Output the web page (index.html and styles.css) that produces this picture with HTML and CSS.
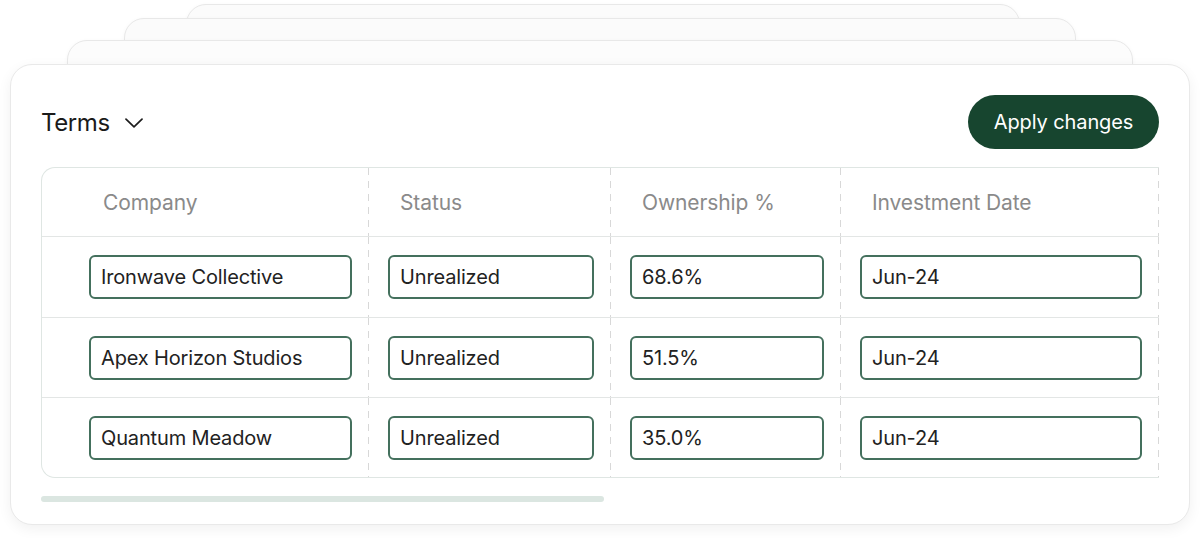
FILE: index.html
```html
<!DOCTYPE html>
<html lang="en">
<head>
<meta charset="utf-8">
<title>Terms</title>
<link rel="stylesheet" href="styles.css">
</head>
<body>
<div class="stage">
  <div class="ghost ghost-3"></div>
  <div class="ghost ghost-2"></div>
  <div class="ghost ghost-1"></div>
  <section class="card">
    <header class="card-head">
      <button class="title" type="button">
        <span>Terms</span>
        <svg class="chev" width="18" height="10" viewBox="0 0 18 10" fill="none"><path d="M1 1.2 L9 8.8 L17 1.2" stroke="#1c1c1c" stroke-width="1.7" stroke-linecap="round" stroke-linejoin="round"/></svg>
      </button>
      <button class="apply" type="button">Apply changes</button>
    </header>
    <div class="table">
      <div class="row head">
        <div class="cell c1">Company</div>
        <div class="cell c2">Status</div>
        <div class="cell c3">Ownership %</div>
        <div class="cell c4">Investment Date</div>
      </div>
      <div class="row first">
        <div class="cell c1"><div class="field">Ironwave Collective</div></div>
        <div class="cell c2"><div class="field">Unrealized</div></div>
        <div class="cell c3"><div class="field">68.6%</div></div>
        <div class="cell c4"><div class="field">Jun-24</div></div>
      </div>
      <div class="row">
        <div class="cell c1"><div class="field">Apex Horizon Studios</div></div>
        <div class="cell c2"><div class="field">Unrealized</div></div>
        <div class="cell c3"><div class="field">51.5%</div></div>
        <div class="cell c4"><div class="field">Jun-24</div></div>
      </div>
      <div class="row last">
        <div class="cell c1"><div class="field">Quantum Meadow</div></div>
        <div class="cell c2"><div class="field">Unrealized</div></div>
        <div class="cell c3"><div class="field">35.0%</div></div>
        <div class="cell c4"><div class="field">Jun-24</div></div>
      </div>
    </div>
    <div class="scrollbar"></div>
  </section>
</div>
</body>
</html>
```

FILE: styles.css
```css
* { box-sizing: border-box; }
html, body {
  margin: 0;
  padding: 0;
  background: #ffffff;
}
body {
  font-family: Inter, "Noto Sans", "Liberation Sans", sans-serif;
  color: #1c1c1c;
}
.stage {
  position: relative;
  width: 1200px;
  height: 538px;
  padding: 64px 10px 0 10px;
}
.ghost {
  position: absolute;
  height: 120px;
  background: #fbfbfb;
  border: 1px solid #e8e8e8;
  border-radius: 20px;
  box-shadow: 0 1px 4px rgba(0,0,0,0.04);
}
.ghost-3 { left: 186px; width: 834px; top: 4px; }
.ghost-2 { left: 124px; width: 952px; top: 18px; }
.ghost-1 { left: 67px; width: 1066px; top: 40px; background: #fcfcfc; }

.card {
  position: relative;
  width: 1180px;
  height: 461px;
  background: #ffffff;
  border: 1px solid #e9e9e9;
  border-radius: 22px;
  box-shadow: 0 4px 14px rgba(0,0,0,0.06);
  padding: 30px 30px 0 30px;
}
.card-head {
  display: flex;
  align-items: center;
  justify-content: space-between;
  height: 54px;
}
.title {
  display: flex;
  align-items: center;
  gap: 15px;
  border: 0;
  background: none;
  padding: 0;
  font: inherit;
  font-size: 24px;
  color: #1a1a1a;
  letter-spacing: -0.4px;
}
.chev { margin-top: 1px; }
.apply {
  height: 54px;
  width: 191px;
  border: 0;
  border-radius: 27px;
  background: #17452f;
  color: #ffffff;
  font: inherit;
  font-size: 20px;
  letter-spacing: -0.1px;
  padding: 0;
}
.table {
  margin-top: 18px;
  width: 1118px;
  border: 1px solid #dfe6e3;
  border-right: 0;
  border-radius: 14px 0 0 14px;
  overflow: hidden;
}
.row {
  display: flex;
  height: 80px;
  border-bottom: 1px solid #e3e6e5;
}
.row.head { height: 69px; }
.row.first { height: 81px; }
.row.last { height: 79px; border-bottom: 0; }
.cell {
  display: flex;
  align-items: center;
  padding: 0 17px 0 19px;
  background-image: repeating-linear-gradient(to bottom, #d8d8d8 0 7px, transparent 7px 13px);
  background-size: 1px 100%;
  background-position: right top;
  background-repeat: no-repeat;
}
.c1 { width: 327px; padding-left: 47px; }
.c2 { width: 242px; }
.c3 { width: 230px; }
.c4 { width: 318px; }
.head .cell {
  font-size: 21px;
  color: #8a8a8a;
  padding-left: 31px;
  letter-spacing: -0.1px;
}
.head .c1 { padding-left: 61px; }
.field {
  width: 100%;
  height: 44px;
  border: 2px solid #44705d;
  border-radius: 6px;
  display: flex;
  align-items: center;
  padding-left: 10px;
  font-size: 20px;
  color: #222222;
  letter-spacing: -0.15px;
}
.scrollbar {
  margin-top: 18px;
  width: 563px;
  height: 6px;
  border-radius: 3px;
  background: #dbe6e1;
}
```
